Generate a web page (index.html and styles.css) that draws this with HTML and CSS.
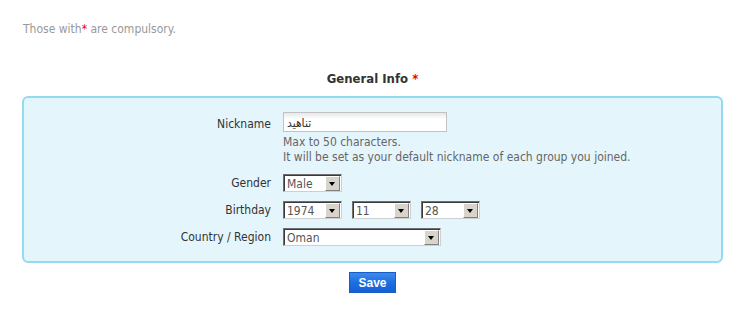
FILE: index.html
```html
<!DOCTYPE html>
<html lang="en">
<head>
  <meta charset="UTF-8">
  <title>General Info</title>
  <link rel="stylesheet" href="styles.css">
</head>
<body>
  <p class="note">Those with<span class="req">*</span> are compulsory.</p>

  <h2 class="section-title">General Info <span class="req">*</span></h2>

  <form class="panel" onsubmit="return false">
    <div class="row">
      <label class="label" for="nick">Nickname</label>
      <div class="field">
        <input id="nick" class="text" type="text" value="تناهید">
        <div class="hint">
          Max to 50 characters.<br>
          It will be set as your default nickname of each group you joined.
        </div>
      </div>
    </div>

    <div class="row">
      <label class="label">Gender</label>
      <div class="field">
        <span class="sel w-sm">
          <select><option>Male</option><option>Female</option></select>
          <i class="arrow"></i>
        </span>
      </div>
    </div>

    <div class="row">
      <label class="label">Birthday</label>
      <div class="field inline">
        <span class="sel w-sm">
          <select><option>1974</option></select>
          <i class="arrow"></i>
        </span>
        <span class="sel w-sm">
          <select><option>11</option></select>
          <i class="arrow"></i>
        </span>
        <span class="sel w-sm">
          <select><option>28</option></select>
          <i class="arrow"></i>
        </span>
      </div>
    </div>

    <div class="row">
      <label class="label">Country / Region</label>
      <div class="field">
        <span class="sel w-lg">
          <select><option>Oman</option></select>
          <i class="arrow"></i>
        </span>
      </div>
    </div>
  </form>

  <div class="actions">
    <button class="save" type="button">Save</button>
  </div>
</body>
</html>
```

FILE: styles.css
```css
* { box-sizing: border-box; margin: 0; padding: 0; }

body {
  font-family: "DejaVu Sans Condensed", "DejaVu Sans", sans-serif;
  font-size: 12px;
  color: #444;
  background-color: #fff;
  padding: 0 20px 0 22px;
}

.req { color: #e00; }

.note {
  color: #999;
  padding: 22px 0 0 1px;
  line-height: 14px;
}

.section-title {
  font-size: 13px;
  font-weight: bold;
  color: #333;
  text-align: center;
  margin-top: 35px;
  line-height: 16px;
}

.panel {
  margin-top: 9px;
  background-color: #e5f5fc;
  border: 2px solid #93dbf0;
  border-radius: 6px;
  padding: 14px 0 15px 0;
  display: flex;
  flex-direction: column;
  gap: 9px;
}

.row {
  display: grid;
  grid-template-columns: 247px 1fr;
  column-gap: 12px;
  align-items: start;
}

.label {
  text-align: right;
  line-height: 18px;
  color: #333;
}

.row:first-child .label { padding-top: 2px; line-height: 20px; }

.field.inline {
  display: flex;
  gap: 10px;
}

.text {
  display: block;
  width: 164px;
  height: 20px;
  border: 1px solid #c2c2c2;
  background: linear-gradient(#e4e8ea, #fff 6px);
  font-family: inherit;
  font-size: 12px;
  color: #333;
  padding: 1px 3px 0;
  outline: none;
}

.hint {
  color: #666;
  line-height: 15px;
  margin-top: 3px;
}

.sel {
  position: relative;
  display: block;
  height: 18px;
  border: 1px solid #6f6f6f;
  border-right-color: #cfcfcf;
  border-bottom-color: #cfcfcf;
  background-color: #fff;
}

.w-sm { width: 59px; }
.w-lg { width: 158px; }

.sel select {
  appearance: none;
  -webkit-appearance: none;
  width: 100%;
  height: 100%;
  border: none;
  border-top: 1px solid #3a3a3a;
  border-left: 1px solid #3a3a3a;
  background: transparent;
  font-family: inherit;
  font-size: 12px;
  color: #555;
  padding: 0 0 0 2px;
  outline: none;
}

.arrow {
  position: absolute;
  top: 1px;
  right: 1px;
  width: 15px;
  height: 15px;
  background-color: #d8d4cc;
  border: 1px solid #fff;
  border-right-color: #808080;
  border-bottom-color: #808080;
}

.arrow::after {
  content: "";
  position: absolute;
  left: 3px;
  top: 5px;
  border-left: 3.5px solid transparent;
  border-right: 3.5px solid transparent;
  border-top: 4px solid #000;
}

.actions {
  display: flex;
  justify-content: center;
  padding: 9px 0 0 0;
}

.save {
  width: 47px;
  height: 21px;
  border: 1px solid #1b5cc4;
  background: linear-gradient(#3b8bee, #1f6ee0 50%, #1360d6);
  color: #fff;
  font-family: "Liberation Sans", Arial, sans-serif;
  font-weight: bold;
  font-size: 12px;
  cursor: pointer;
}
```
